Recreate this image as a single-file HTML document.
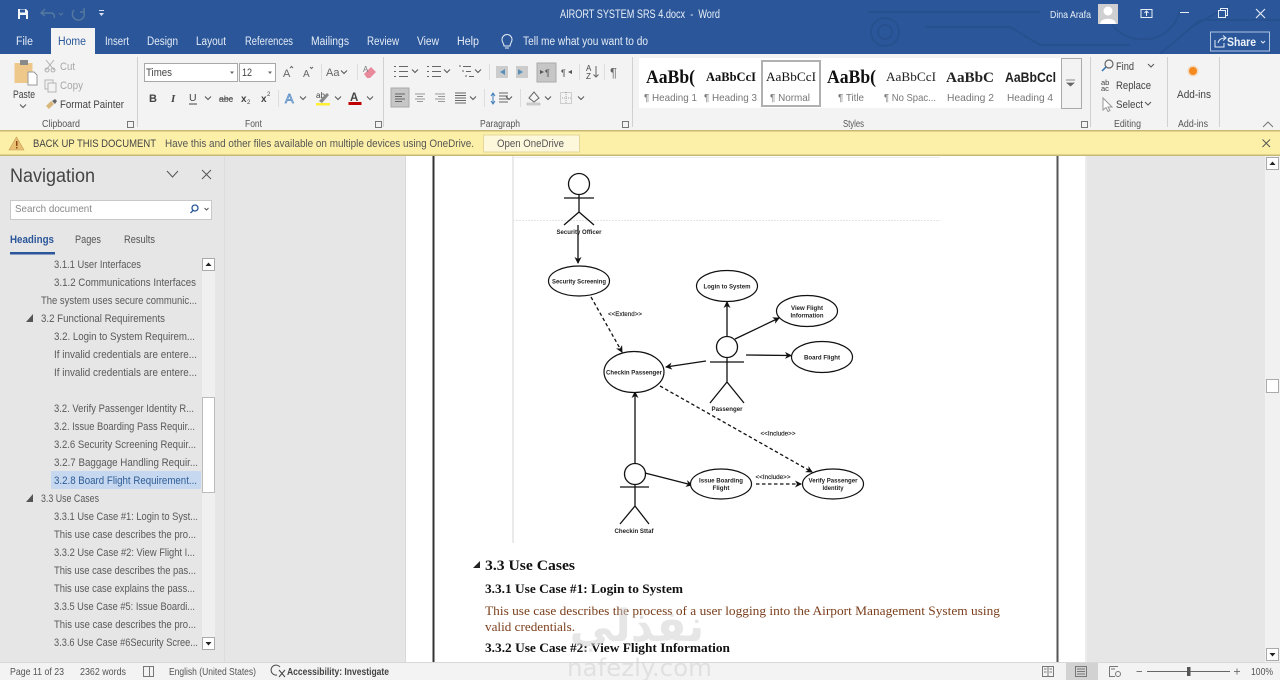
<!DOCTYPE html>
<html><head><meta charset="utf-8"><title>AIRORT SYSTEM SRS 4.docx - Word</title>
<style>
html,body{margin:0;padding:0;width:1280px;height:680px;overflow:hidden;background:#e6e6e6}
svg{display:block;filter:blur(.3px)}
text{font-family:"Liberation Sans",sans-serif;font-size:11px;fill:#444;white-space:pre}
.w{fill:#e8eef7}
.tab{font-size:11.5px;fill:#e4ebf6}
.g{fill:#a8a8a8}
.lab{font-size:10px;fill:#555}
.sty{font-size:10.5px;fill:#777}
.se{font-family:"Liberation Serif",serif;fill:#111}
.b{font-weight:bold}
.nv{font-size:11px;fill:#5a5a5a}
.dg{font-size:6.5px;font-weight:bold;fill:#222;text-anchor:middle}
.dl{font-size:6.5px;fill:#222;stroke:#222;stroke-width:.15;text-anchor:middle}
.i{fill:none;stroke:#666;stroke-width:1}
.ch{fill:none;stroke:#555;stroke-width:1}
.uml{fill:none;stroke:#111;stroke-width:1.3}
.el{fill:#fff;stroke:#111;stroke-width:1.2}
</style></head><body>
<svg width="1280" height="680" viewBox="0 0 1280 680" xmlns="http://www.w3.org/2000/svg">
<defs>
<marker id="ar" markerWidth="7" markerHeight="7" refX="6" refY="3.5" orient="auto" markerUnits="userSpaceOnUse"><path d="M0 0L7 3.5L0 7L2 3.5Z" fill="#111"/></marker>
<g id="chv"><path d="M-3 -1.5L0 1.5L3 -1.5" class="ch"/></g>
</defs>

<!-- title bar -->
<rect width="1280" height="54" fill="#2b579a"/>
<g fill="none" stroke="#27508f" stroke-width="2">
<path d="M868 12H1040M925 27H1010L1040 45H1130M1110 20C1120 45 1170 50 1180 10M1190 28L1230 5M1160 54L1200 20H1280"/>
<circle cx="885" cy="32" r="14"/><circle cx="885" cy="32" r="7"/>
</g>
<!-- QAT -->
<path d="M18 9H26L28 11V19H18Z" fill="#f3f6fb"/><rect x="20" y="9.5" width="5" height="3" fill="#2b579a"/><rect x="20" y="15" width="6" height="4" fill="#2b579a"/>
<path d="M42 13H51C54 13 55 16 54 18M45 9L41 13L45 16" fill="none" stroke="#55799f" stroke-width="1.4"/>
<path d="M59 13L61 15L63 13" fill="none" stroke="#55799f"/>
<path d="M74 10A6 6 0 1 0 84 12M84 8V12H80" fill="none" stroke="#55799f" stroke-width="1.4"/>
<rect x="99" y="10" width="5" height="1" fill="#dbe4f2"/><path d="M99 13H104L101.5 16Z" fill="#dbe4f2"/>
<text x="560" y="18" class="w" style="font-size:11.5px" textLength="160" lengthAdjust="spacingAndGlyphs">AIRORT SYSTEM SRS 4.docx  -  Word</text>
<text x="1050" y="18" class="w" style="font-size:10.5px" textLength="41" lengthAdjust="spacingAndGlyphs">Dina Arafa</text>
<rect x="1098" y="4" width="20" height="20" fill="#cfcfd2"/><circle cx="1108" cy="11" r="4.5" fill="#fff"/><path d="M1100 24C1100 17 1116 17 1116 24Z" fill="#fff"/>
<g fill="none" stroke="#e8eef7"><rect x="1141" y="9.5" width="11" height="8"/><path d="M1146.500 16V11M1144.500 13L1146.500 11L1148.500 13"/>
<path d="M1180 12.5H1189"/><rect x="1218.5" y="10.5" width="7" height="7"/><path d="M1220.500 10.500V8.500H1227.500V15.500H1225.500"/><path d="M1256 9L1265 18M1265 9L1256 18" stroke-width="1.1"/></g>
<!-- tabs -->
<rect x="51" y="28" width="44" height="26" fill="#f3f3f3"/>
<text x="16" y="45" class="tab" textLength="17" lengthAdjust="spacingAndGlyphs">File</text>
<text x="58" y="45" class="tab" style="fill:#2b579a" textLength="28" lengthAdjust="spacingAndGlyphs">Home</text>
<text x="105" y="45" class="tab" textLength="24" lengthAdjust="spacingAndGlyphs">Insert</text>
<text x="147" y="45" class="tab" textLength="31" lengthAdjust="spacingAndGlyphs">Design</text>
<text x="196" y="45" class="tab" textLength="30" lengthAdjust="spacingAndGlyphs">Layout</text>
<text x="245" y="45" class="tab" textLength="48" lengthAdjust="spacingAndGlyphs">References</text>
<text x="311" y="45" class="tab" textLength="38" lengthAdjust="spacingAndGlyphs">Mailings</text>
<text x="367" y="45" class="tab" textLength="32" lengthAdjust="spacingAndGlyphs">Review</text>
<text x="417" y="45" class="tab" textLength="22" lengthAdjust="spacingAndGlyphs">View</text>
<text x="457" y="45" class="tab" textLength="22" lengthAdjust="spacingAndGlyphs">Help</text>
<path d="M504 46C504 43 502 43 502 39.500A5 5 0 0 1 512 39.500C512 43 510 43 510 46ZM505 48H509" fill="none" stroke="#e8eef7"/>
<text x="523" y="45" class="tab" textLength="125" lengthAdjust="spacingAndGlyphs">Tell me what you want to do</text>
<rect x="1210.5" y="32" width="59" height="19" fill="none" stroke="#aec3e0"/>
<path d="M1215 40V47H1224V43M1218 43C1219 39 1222 38 1225 38M1223 35.500L1226 38L1223 40.500" fill="none" stroke="#e8eef7"/>
<text x="1227" y="46" class="b" style="font-size:12px;fill:#eef3fa" textLength="29" lengthAdjust="spacingAndGlyphs">Share</text>
<path d="M1261 41L1263 43L1265 41" fill="none" stroke="#e8eef7"/>

<!-- ribbon -->
<rect y="54" width="1280" height="76" fill="#f3f3f3"/>
<g stroke="#d0d0d0"><path d="M137.500 57V127M383.500 57V127M632.500 57V127M1090.500 57V127M1167.500 57V127M1219.500 57V127"/></g>
<text x="42" y="127" class="lab" textLength="38" lengthAdjust="spacingAndGlyphs">Clipboard</text>
<text x="245" y="127" class="lab" textLength="17" lengthAdjust="spacingAndGlyphs">Font</text>
<text x="480" y="127" class="lab" textLength="40" lengthAdjust="spacingAndGlyphs">Paragraph</text>
<text x="843" y="127" class="lab" textLength="21" lengthAdjust="spacingAndGlyphs">Styles</text>
<text x="1114" y="127" class="lab" textLength="27" lengthAdjust="spacingAndGlyphs">Editing</text>
<text x="1178" y="127" class="lab" textLength="30" lengthAdjust="spacingAndGlyphs">Add-ins</text>
<g fill="none" stroke="#777"><rect x="127.5" y="121.5" width="6" height="6"/><rect x="375.5" y="121.5" width="6" height="6"/><rect x="622.5" y="121.5" width="6" height="6"/><rect x="1081.5" y="121.5" width="6" height="6"/><path d="M1263 127L1268 122L1273 127"/></g>
<!-- clipboard -->
<rect x="14.5" y="63" width="18" height="20" fill="#eec88a"/><rect x="20" y="60" width="8" height="5" fill="#8a8a8a"/>
<path d="M28 72H34L37 75V85H28Z" fill="#fff" stroke="#999"/>
<text x="13" y="98" style="font-size:11px;fill:#444" textLength="22" lengthAdjust="spacingAndGlyphs">Paste</text>
<use href="#chv" x="23" y="106"/>
<path d="M46 60L54 70M54 60L46 70" stroke="#b0b0b0" fill="none"/><circle cx="47" cy="70" r="2" fill="none" stroke="#b0b0b0"/><circle cx="53" cy="70" r="2" fill="none" stroke="#b0b0b0"/>
<text x="60" y="70" class="g" textLength="15" lengthAdjust="spacingAndGlyphs">Cut</text>
<rect x="45" y="80" width="8" height="9" fill="none" stroke="#b5b5b5"/><rect x="48" y="83" width="8" height="9" fill="#f3f3f3" stroke="#b5b5b5"/>
<text x="60" y="89" class="g" textLength="23" lengthAdjust="spacingAndGlyphs">Copy</text>
<path d="M46 106L51 101L54 104L49 109Z" fill="#d9b77a"/><path d="M52 101L55 99L57 101L55 104Z" fill="#666"/>
<text x="60" y="108" textLength="64" lengthAdjust="spacingAndGlyphs">Format Painter</text>
<!-- font -->
<rect x="144.5" y="63.5" width="93" height="18" fill="#fff" stroke="#a8a8a8"/><rect x="239.5" y="63.5" width="36" height="18" fill="#fff" stroke="#a8a8a8"/>
<text x="146" y="76" textLength="26" lengthAdjust="spacingAndGlyphs">Times</text><text x="242" y="76" textLength="10" lengthAdjust="spacingAndGlyphs">12</text>
<path d="M230 71.500H234L232 74ZM268 71.500H272L270 74Z" fill="#666"/>
<text x="283" y="77" style="font-size:11px;fill:#666">A</text><path d="M290 68L291.500 66.500L293 68" class="i"/>
<text x="303" y="77" style="font-size:10px;fill:#666">A</text><path d="M310 67L311.500 68.500L313 67" class="i"/>
<text x="326" y="76" style="fill:#666">Aa</text><use href="#chv" x="344" y="72"/>
<path d="M364 74L371 67L376 72L370 78H367Z" fill="#e88a9c"/><text x="363" y="72" style="font-size:8px;fill:#777">A</text>
<line x1="321.5" y1="64" x2="321.5" y2="80" stroke="#ddd"/><line x1="357.5" y1="64" x2="357.5" y2="80" stroke="#ddd"/>
<text x="149" y="102" class="b" style="font-size:11px">B</text>
<text x="171" y="102" style="font-size:11px;font-style:italic;font-family:'Liberation Serif',serif;font-weight:bold">I</text>
<text x="189" y="101" style="font-size:10.5px">U</text><line x1="189" y1="104" x2="197" y2="104" stroke="#444"/>
<use href="#chv" x="208" y="98"/>
<text x="219" y="102" style="font-size:9.5px" textLength="14" lengthAdjust="spacingAndGlyphs">abc</text><line x1="219" y1="99" x2="233" y2="99" stroke="#555"/>
<text x="241" y="102" class="b" style="font-size:10px">x</text><text x="247" y="104" style="font-size:6px">2</text>
<text x="261" y="102" class="b" style="font-size:10px">x</text><text x="267" y="96" style="font-size:6px">2</text>
<line x1="278.5" y1="90" x2="278.5" y2="107" stroke="#ddd"/>
<text x="285" y="103" style="font-size:13px;fill:#d4e2f2;stroke:#5b8fc7;stroke-width:.8">A</text><use href="#chv" x="303" y="98"/>
<text x="316" y="98" style="font-size:8px">ab</text><path d="M319 101L327 93L329 95L322 103Z" fill="#888"/><rect x="316" y="103" width="14" height="2.5" fill="#ffee33"/><use href="#chv" x="338" y="98"/>
<text x="350" y="101" class="b" style="font-size:11.5px">A</text><rect x="348.5" y="102" width="13" height="3" fill="#c00000"/><use href="#chv" x="370" y="98"/>
<!-- paragraph row 1 -->
<g class="i"><path d="M399 66.500H408M399 71.500H408M399 76.500H408M394 66.500H396M394 71.500H396M394 76.500H396"/>
<path d="M432 66.500H441M432 71.500H441M432 76.500H441M427 66.500H429M427 71.500H429M427 76.500H429"/>
<path d="M463 66.500H471M466 71.500H471M469 76.500H474M459 66H461M462 71H464M465 76H467"/></g>
<use href="#chv" x="415" y="71"/><use href="#chv" x="447" y="71"/><use href="#chv" x="478" y="71"/>
<line x1="489.5" y1="64" x2="489.5" y2="80" stroke="#ddd"/>
<rect x="496" y="66" width="12" height="12" fill="#ccc"/><path d="M505 69L500 72L505 75Z" fill="#5b8fb7"/>
<rect x="516" y="66" width="12" height="12" fill="#ccc"/><path d="M518 69L523 72L518 75Z" fill="#5b8fb7"/>
<rect x="537" y="63" width="19" height="19" fill="#c6c6c6" stroke="#aaa"/><text x="545" y="76" style="font-size:9px;fill:#555">¶</text><path d="M540 70L544 72L540 74Z" fill="#555"/>
<text x="561" y="76" style="font-size:9px;fill:#555">¶</text><path d="M572 70L568 72L572 74Z" fill="#555"/>
<line x1="579.5" y1="64" x2="579.5" y2="80" stroke="#ddd"/>
<text x="586" y="71" style="font-size:8px">A</text><text x="586" y="79" style="font-size:8px">Z</text><path d="M596 66V77M593.500 74.500L596 77L598.500 74.500" class="i"/>
<line x1="604.5" y1="64" x2="604.5" y2="80" stroke="#ddd"/>
<text x="610" y="77" style="font-size:13px;fill:#666">¶</text>
<!-- paragraph row 2 -->
<rect x="391" y="88" width="18" height="19" fill="#c6c6c6" stroke="#aaa"/>
<g class="i"><path d="M395 94H405M395 96.500H402M395 99H405M395 101.500H402"/>
<path d="M415 94H425M417 96.500H423M415 99H425M417 101.500H423" stroke="#999"/>
<path d="M435 94H445M438 96.500H445M435 99H445M438 101.500H445" stroke="#999"/>
<path d="M455 93H466M455 95.500H466M455 98H466M455 100.500H466M455 103H466"/></g>
<use href="#chv" x="473" y="98"/>
<line x1="484.5" y1="89" x2="484.5" y2="107" stroke="#ddd"/>
<path d="M499 93H508M499 96H508M499 99H508M499 102H508" class="i"/><path d="M493 94V103M491 96L493 93L495 96M491 101L493 104L495 101" fill="none" stroke="#3d7cb8"/>
<use href="#chv" x="509" y="98"/>
<line x1="520.5" y1="89" x2="520.5" y2="107" stroke="#ddd"/>
<path d="M529 98L534 92L539 98L534 102Z" fill="#f5f5f5" stroke="#666"/><rect x="527" y="103" width="13" height="2" fill="#d8d8d8" stroke="#aaa" stroke-width=".5"/>
<use href="#chv" x="548" y="98"/>
<g stroke="#a8a8a8" fill="none" stroke-dasharray="1 1"><rect x="560.5" y="92.5" width="11" height="11"/><path d="M566 92V104M560 98H572"/></g>
<use href="#chv" x="581" y="98"/>
<!-- styles -->
<rect x="639" y="58" width="422" height="50" fill="#fff"/>
<rect x="1061.5" y="58.5" width="20" height="50" fill="#f3f3f3" stroke="#aaa"/>
<path d="M1066 80H1075M1067 83H1074L1070.500 86Z" fill="#666" stroke="#666" stroke-width=".7"/>
<rect x="762" y="61" width="58" height="45" fill="#fff" stroke="#b0b0b0" stroke-width="2"/>
<text x="646" y="83" class="se b" style="font-size:19px" textLength="49" lengthAdjust="spacingAndGlyphs">AaBb(</text>
<text x="706" y="81" class="se b" style="font-size:13px" textLength="50" lengthAdjust="spacingAndGlyphs">AaBbCcI</text>
<text x="766" y="81" class="se" style="font-size:13px" textLength="50" lengthAdjust="spacingAndGlyphs">AaBbCcI</text>
<text x="827" y="83" class="se b" style="font-size:19px" textLength="49" lengthAdjust="spacingAndGlyphs">AaBb(</text>
<text x="886" y="81" class="se" style="font-size:13px;fill:#222" textLength="50" lengthAdjust="spacingAndGlyphs">AaBbCcI</text>
<text x="946" y="82" class="se b" style="font-size:15px;fill:#222" textLength="48" lengthAdjust="spacingAndGlyphs">AaBbC</text>
<text x="1005" y="82" class="b" style="font-size:13.5px;fill:#222" textLength="51" lengthAdjust="spacingAndGlyphs">AaBbCcl</text>
<text x="644" y="101" class="sty" textLength="53" lengthAdjust="spacingAndGlyphs">¶ Heading 1</text>
<text x="704" y="101" class="sty" textLength="53" lengthAdjust="spacingAndGlyphs">¶ Heading 3</text>
<text x="770" y="101" class="sty" textLength="40" lengthAdjust="spacingAndGlyphs">¶ Normal</text>
<text x="838" y="101" class="sty" textLength="26" lengthAdjust="spacingAndGlyphs">¶ Title</text>
<text x="884" y="101" class="sty" textLength="52" lengthAdjust="spacingAndGlyphs">¶ No Spac...</text>
<text x="947" y="101" class="sty" textLength="47" lengthAdjust="spacingAndGlyphs">Heading 2</text>
<text x="1007" y="101" class="sty" textLength="46" lengthAdjust="spacingAndGlyphs">Heading 4</text>
<!-- editing -->
<circle cx="1109" cy="64" r="4" fill="none" stroke="#666" stroke-width="1.2"/><line x1="1106" y1="67" x2="1102" y2="71" stroke="#2b6fb5" stroke-width="1.5"/>
<text x="1116" y="70" textLength="18" lengthAdjust="spacingAndGlyphs">Find</text><use href="#chv" x="1151" y="65.5"/>
<text x="1101" y="85" style="font-size:7.5px">ab</text><text x="1101" y="91" style="font-size:7.5px">ac</text>
<text x="1116" y="89" textLength="35" lengthAdjust="spacingAndGlyphs">Replace</text>
<path d="M1103 98V110L1106 107.500L1108 111.500L1110 110.500L1108 107H1112Z" fill="#fff" stroke="#999"/>
<text x="1116" y="108" textLength="27" lengthAdjust="spacingAndGlyphs">Select</text><use href="#chv" x="1148" y="103.5"/>
<circle cx="1193" cy="71" r="4" fill="#f58a1f"/><circle cx="1193" cy="71" r="5.5" fill="#f58a1f" opacity=".25"/>
<text x="1177" y="98" textLength="34" lengthAdjust="spacingAndGlyphs">Add-ins</text>

<!-- notification -->
<rect y="130" width="1280" height="26" fill="#fcf0a8"/>
<rect y="130" width="1280" height="1.5" fill="#c9b871"/><rect y="154.5" width="1280" height="1.5" fill="#c9b871"/>
<path d="M16.500 137L24 150H9Z" fill="#e9bf74" stroke="#c79a55" stroke-width=".6"/><rect x="16" y="141" width="1.5" height="5" fill="#8a4a12"/><rect x="16" y="147" width="1.5" height="1.5" fill="#8a4a12"/>
<text x="33" y="147" style="fill:#444" textLength="123" lengthAdjust="spacingAndGlyphs">BACK UP THIS DOCUMENT</text>
<text x="165" y="147" style="fill:#555" textLength="309" lengthAdjust="spacingAndGlyphs">Have this and other files available on multiple devices using OneDrive.</text>
<rect x="483.5" y="135" width="96" height="17" fill="#fdf8dc" stroke="#e3d79c"/>
<text x="497" y="147" style="fill:#555" textLength="67" lengthAdjust="spacingAndGlyphs">Open OneDrive</text>
<path d="M1262.500 139.500L1270 147M1270 139.500L1262.500 147" fill="none" stroke="#555"/>

<!-- document -->
<rect x="225" y="156" width="181" height="506" fill="#e6e6e6"/>
<rect x="406" y="156" width="679" height="506" fill="#fff"/>
<rect x="1085" y="156" width="2" height="506" fill="#ececec"/>
<rect x="405" y="156" width="1" height="506" fill="#d8d8d8"/>
<rect x="1265" y="156" width="15" height="506" fill="#f1f1f1"/>
<rect x="432.5" y="156" width="2" height="506" fill="#333"/>
<rect x="1056.5" y="156" width="2" height="506" fill="#555"/>
<line x1="513" y1="156" x2="513" y2="543" stroke="#d6d6d6"/>
<line x1="513" y1="157.5" x2="940" y2="157.5" stroke="#eee"/>
<line x1="513" y1="220.5" x2="940" y2="220.5" stroke="#e4e4e4" stroke-dasharray="2 1"/>

<!-- UML -->
<g class="uml">
<circle cx="579" cy="184" r="10.5"/><path d="M564 198H594M579 194.500V212M564 225L579 212L594 225"/>
<circle cx="727" cy="347" r="10.5"/><path d="M710 362H744M727 357.500V382M710 403L727 382L744 403"/>
<circle cx="635" cy="474" r="10.5"/><path d="M620 487H649M635 484.500V506M620 524L635 506L649 524"/>
<path d="M578 225V263" marker-end="url(#ar)"/>
<path d="M727 336V302" marker-end="url(#ar)"/>
<path d="M735 339L779 318" marker-end="url(#ar)"/>
<path d="M746 355L791 355.500" marker-end="url(#ar)"/>
<path d="M706 361L666 367" marker-end="url(#ar)"/>
<path d="M635 463V392" marker-end="url(#ar)"/>
<path d="M645 473L692 485" marker-end="url(#ar)"/>
<path d="M591 297L622 352" stroke-dasharray="3.500 2.500" marker-end="url(#ar)"/>
<path d="M660 386L812 472" stroke-dasharray="3.500 2.500" marker-end="url(#ar)"/>
<path d="M756 484H801" stroke-dasharray="3.500 2.500" marker-end="url(#ar)"/>
</g>
<ellipse cx="579" cy="281" rx="30.5" ry="15" class="el"/>
<ellipse cx="727" cy="286" rx="30.5" ry="15.5" class="el"/>
<ellipse cx="807" cy="311" rx="30.5" ry="15.5" class="el"/>
<ellipse cx="822" cy="357" rx="30.5" ry="15.5" class="el"/>
<ellipse cx="634" cy="372" rx="30" ry="20.5" class="el"/>
<ellipse cx="721" cy="484" rx="30.5" ry="15" class="el"/>
<ellipse cx="833" cy="484" rx="30.5" ry="15" class="el"/>
<text x="579" y="234" class="dg" textLength="45" lengthAdjust="spacingAndGlyphs">Security Officer</text>
<text x="579" y="283.5" class="dg" textLength="54" lengthAdjust="spacingAndGlyphs">Security Screening</text>
<text x="727" y="288.5" class="dg" textLength="47" lengthAdjust="spacingAndGlyphs">Login to System</text>
<text x="807" y="310" class="dg" textLength="32" lengthAdjust="spacingAndGlyphs">View Flight</text><text x="807" y="317.5" class="dg" textLength="33" lengthAdjust="spacingAndGlyphs">Information</text>
<text x="822" y="359.5" class="dg" textLength="36" lengthAdjust="spacingAndGlyphs">Board Flight</text>
<text x="634" y="374.5" class="dg" textLength="56" lengthAdjust="spacingAndGlyphs">Checkin Passenger</text>
<text x="727" y="411" class="dg" textLength="31" lengthAdjust="spacingAndGlyphs">Passenger</text>
<text x="625" y="316" class="dl" textLength="34" lengthAdjust="spacingAndGlyphs">&lt;&lt;Extend&gt;&gt;</text>
<text x="778" y="435.5" class="dl" textLength="35" lengthAdjust="spacingAndGlyphs">&lt;&lt;Include&gt;&gt;</text>
<text x="773" y="479" class="dl" textLength="35" lengthAdjust="spacingAndGlyphs">&lt;&lt;Include&gt;&gt;</text>
<text x="721" y="482.5" class="dg" textLength="44" lengthAdjust="spacingAndGlyphs">Issue Boarding</text><text x="721" y="490" class="dg" textLength="17" lengthAdjust="spacingAndGlyphs">Flight</text>
<text x="833" y="482.5" class="dg" textLength="49" lengthAdjust="spacingAndGlyphs">Verify Passenger</text><text x="833" y="490" class="dg" textLength="21" lengthAdjust="spacingAndGlyphs">Identity</text>
<text x="634" y="533" class="dg" textLength="39" lengthAdjust="spacingAndGlyphs">Checkin Sttaf</text>

<!-- doc text -->
<path d="M480 561V568H473Z" fill="#222"/>
<text x="485" y="570" class="se b" style="font-size:15px" textLength="90" lengthAdjust="spacingAndGlyphs">3.3 Use Cases</text>
<text x="485" y="593" class="se b" style="font-size:13px" textLength="198" lengthAdjust="spacingAndGlyphs">3.3.1 Use Case #1: Login to System</text>
<text x="485" y="615" class="se" style="font-size:13px;fill:#7b3f1d" textLength="515" lengthAdjust="spacingAndGlyphs">This use case describes the process of a user logging into the Airport Management System using</text>
<text x="485" y="631" class="se" style="font-size:13px;fill:#7b3f1d" textLength="90" lengthAdjust="spacingAndGlyphs">valid credentials.</text>
<text x="485" y="652" class="se b" style="font-size:13px" textLength="245" lengthAdjust="spacingAndGlyphs">3.3.2 Use Case #2: View Flight Information</text>

<!-- nav pane -->
<rect y="156" width="225" height="506" fill="#e6e6e6"/>
<rect x="224" y="156" width="1" height="506" fill="#dcdcdc"/>
<text x="10" y="182" style="font-size:19px;fill:#444" textLength="85" lengthAdjust="spacingAndGlyphs">Navigation</text>
<path d="M167 171L172.500 177L178 171M202 170L211 179M211 170L202 179" fill="none" stroke="#555"/>
<rect x="10.5" y="200.5" width="201" height="19" fill="#fff" stroke="#c8c8c8"/>
<text x="15" y="212" style="font-size:10.5px;fill:#888" textLength="77" lengthAdjust="spacingAndGlyphs">Search document</text>
<circle cx="195" cy="208" r="3" fill="none" stroke="#2b579a" stroke-width="1.3"/><line x1="193" y1="210.5" x2="190.5" y2="213" stroke="#2b579a" stroke-width="1.3"/>
<path d="M204.500 208L206.500 210L208.500 208" class="ch"/>
<text x="10" y="243" class="b" style="fill:#2b579a" textLength="44" lengthAdjust="spacingAndGlyphs">Headings</text>
<text x="75" y="243" style="fill:#555" textLength="26" lengthAdjust="spacingAndGlyphs">Pages</text>
<text x="124" y="243" style="fill:#555" textLength="31" lengthAdjust="spacingAndGlyphs">Results</text>
<rect x="10" y="252" width="45" height="2.5" fill="#2b579a"/>
<rect x="51" y="471" width="150" height="18" rx="1" fill="#c5d8f0"/>
<text x="54" y="268" class="nv" textLength="87" lengthAdjust="spacingAndGlyphs">3.1.1 User Interfaces</text>
<text x="54" y="286" class="nv" textLength="142" lengthAdjust="spacingAndGlyphs">3.1.2 Communications Interfaces</text>
<text x="41" y="304" class="nv" textLength="156" lengthAdjust="spacingAndGlyphs">The system uses secure communic...</text>
<text x="41" y="322" class="nv" textLength="124" lengthAdjust="spacingAndGlyphs">3.2 Functional Requirements</text>
<text x="54" y="340" class="nv" textLength="141" lengthAdjust="spacingAndGlyphs">3.2. Login to System Requirem...</text>
<text x="54" y="358" class="nv" textLength="143" lengthAdjust="spacingAndGlyphs">If invalid credentials are entere...</text>
<text x="54" y="376" class="nv" textLength="143" lengthAdjust="spacingAndGlyphs">If invalid credentials are entere...</text>
<text x="54" y="412" class="nv" textLength="140" lengthAdjust="spacingAndGlyphs">3.2. Verify Passenger Identity R...</text>
<text x="54" y="430" class="nv" textLength="141" lengthAdjust="spacingAndGlyphs">3.2. Issue Boarding Pass Requir...</text>
<text x="54" y="448" class="nv" textLength="142" lengthAdjust="spacingAndGlyphs">3.2.6 Security Screening Requir...</text>
<text x="54" y="466" class="nv" textLength="144" lengthAdjust="spacingAndGlyphs">3.2.7 Baggage Handling Requir...</text>
<text x="54" y="484" class="nv" style="fill:#2f5c96" textLength="143" lengthAdjust="spacingAndGlyphs">3.2.8 Board Flight Requirement...</text>
<text x="41" y="502" class="nv" textLength="58" lengthAdjust="spacingAndGlyphs">3.3 Use Cases</text>
<text x="54" y="520" class="nv" textLength="144" lengthAdjust="spacingAndGlyphs">3.3.1 Use Case #1: Login to Syst...</text>
<text x="54" y="538" class="nv" textLength="142" lengthAdjust="spacingAndGlyphs">This use case describes the pro...</text>
<text x="54" y="556" class="nv" textLength="141" lengthAdjust="spacingAndGlyphs">3.3.2 Use Case #2: View Flight I...</text>
<text x="54" y="574" class="nv" textLength="142" lengthAdjust="spacingAndGlyphs">This use case describes the pas...</text>
<text x="54" y="592" class="nv" textLength="141" lengthAdjust="spacingAndGlyphs">This use case explains the pass...</text>
<text x="54" y="610" class="nv" textLength="141" lengthAdjust="spacingAndGlyphs">3.3.5 Use Case #5: Issue Boardi...</text>
<text x="54" y="628" class="nv" textLength="142" lengthAdjust="spacingAndGlyphs">This use case describes the pro...</text>
<text x="54" y="646" class="nv" textLength="144" lengthAdjust="spacingAndGlyphs">3.3.6 Use Case #6Security Scree...</text>
<path d="M33 314V322H26ZM33 494V502H26Z" fill="#555"/>
<!-- nav scrollbar -->
<rect x="202" y="258" width="13" height="392" fill="#f0f0f0"/>
<rect x="202.5" y="258.5" width="12" height="12" fill="#fff" stroke="#aaa"/><path d="M205.500 266H211.500L208.500 262.500Z" fill="#222"/>
<rect x="202.5" y="637.5" width="12" height="12" fill="#fff" stroke="#aaa"/><path d="M205.500 642H211.500L208.500 645.500Z" fill="#222"/>
<rect x="202.5" y="397.5" width="12" height="95" fill="#fff" stroke="#bbb"/>
<!-- doc scrollbar -->
<rect x="1266.5" y="157.5" width="12" height="12" fill="#fff" stroke="#aaa"/><path d="M1269.500 165H1275.500L1272.500 161.500Z" fill="#222"/>
<rect x="1266.5" y="379.5" width="12" height="13" fill="#fff" stroke="#aaa"/>
<rect x="1266.5" y="648.5" width="12" height="12" fill="#fff" stroke="#aaa"/><path d="M1269.500 653H1275.500L1272.500 656.500Z" fill="#222"/>

<!-- status bar -->
<rect y="662" width="1280" height="18" fill="#f3f3f3"/>
<rect y="662" width="1280" height="1" fill="#d8d8d8"/>
<text x="10" y="675" style="font-size:10.5px;fill:#555" textLength="54" lengthAdjust="spacingAndGlyphs">Page 11 of 23</text>
<text x="80" y="675" style="font-size:10.5px;fill:#555" textLength="46" lengthAdjust="spacingAndGlyphs">2362 words</text>
<path d="M143.500 666.500H153.500V676.500H143.500ZM149.500 666.500V676.500" fill="none" stroke="#777"/>
<text x="169" y="675" style="font-size:10.5px;fill:#555" textLength="87" lengthAdjust="spacingAndGlyphs">English (United States)</text>
<path d="M280 667A5 5 0 1 0 277 675M279 670L285 677M285 670L279 677" fill="none" stroke="#444"/>
<text x="287" y="675" class="b" style="font-size:10px;fill:#444" textLength="102" lengthAdjust="spacingAndGlyphs">Accessibility: Investigate</text>
<rect x="1066" y="663" width="32" height="17" fill="#d2d2d2"/>
<g fill="none" stroke="#777"><path d="M1042.500 666.500H1053.500V676.500H1042.500ZM1048 666.500V676.500M1044 669H1046.500M1044 672H1046.500M1049.500 669H1052M1049.500 672H1052"/>
<path d="M1075.500 666.500H1086.500V676.500H1075.500ZM1077 669H1085M1077 671.500H1085M1077 674H1085"/>
<path d="M1109.500 666.500H1118M1109.500 666.500V676.500H1115M1111 669H1115"/><circle cx="1118" cy="674" r="2.5"/>
<path d="M1136.500 671.500H1142M1234 671.500H1240M1237 668.500V674.500"/></g>
<line x1="1147" y1="671.5" x2="1230" y2="671.5" stroke="#666"/>
<rect x="1187" y="667" width="3.5" height="9" fill="#555"/>
<text x="1251" y="675" style="font-size:10.5px;fill:#555" textLength="22" lengthAdjust="spacingAndGlyphs">100%</text>

<!-- watermark -->
<g opacity=".5">
<text x="637" y="641" text-anchor="middle" style="font-family:'DejaVu Sans','Noto Sans CJK SC',sans-serif;font-size:44px;font-weight:bold;fill:#cfcfcf" direction="rtl">نفذلي</text>
<text x="567" y="676" style="font-family:'DejaVu Sans',sans-serif;font-size:24px;fill:#cfcfcf" textLength="145" lengthAdjust="spacingAndGlyphs">nafezly.com</text>
</g>
</svg>
</body></html>
